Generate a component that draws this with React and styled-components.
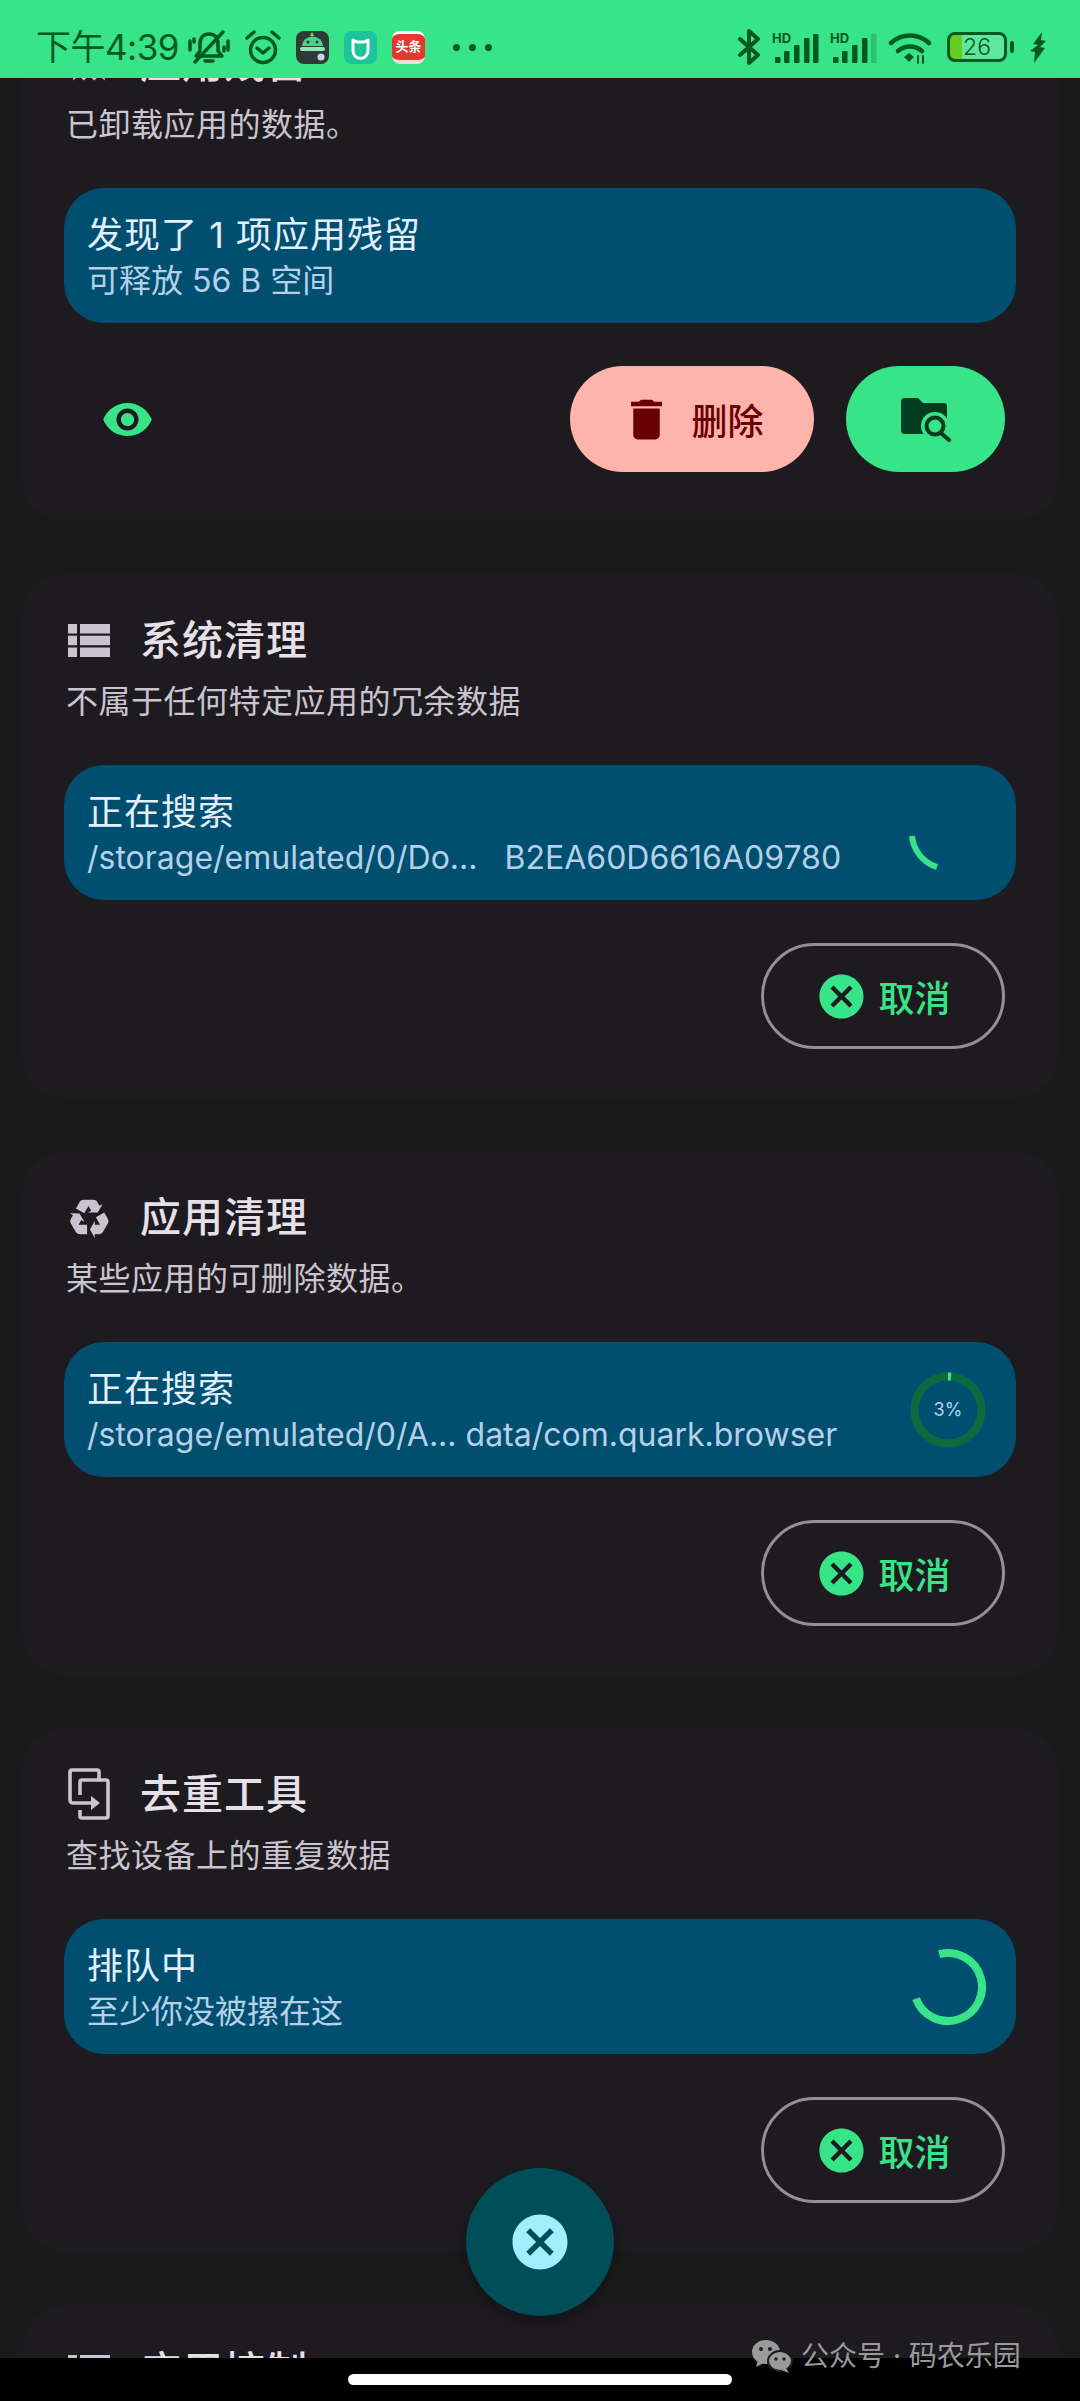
import React from 'react'
import styled, { createGlobalStyle } from 'styled-components'
import { MdCancel, MdDelete, MdVisibility } from 'react-icons/md'

const GREEN = '#38e488'
const STATUS_INK = '#04591f'

const GlobalStyle = createGlobalStyle`
  html, body {
    margin: 0;
    padding: 0;
    background: #1a1a1a;
  }
  * {
    box-sizing: border-box;
  }
`

const Screen = styled.div`
  position: relative;
  display: flex;
  flex-direction: column;
  width: 1080px;
  height: 2401px;
  overflow: hidden;
  background: #1a1a1a;
  font-family: Inter, 'Noto Sans CJK SC', sans-serif;
`

const StatusBar = styled.header`
  flex: none;
  display: flex;
  align-items: center;
  justify-content: space-between;
  height: 78px;
  padding: 16px 34px 0 36px;
  background: ${GREEN};
  color: ${STATUS_INK};
  z-index: 2;
`

const StatusGroup = styled.div`
  display: flex;
  align-items: center;
  gap: ${props => props.$gap}px;
`

const Clock = styled.span`
  width: 142px;
  margin-right: -5px;
  font-size: 35px;
  line-height: 40px;
  white-space: nowrap;
  letter-spacing: -0.5px;
`

const AppTile = styled.div`
  display: flex;
  align-items: center;
  justify-content: center;
  width: 33px;
  height: 33px;
  border-radius: 8px;
  overflow: hidden;
  background: ${props => props.$bg};
`

const ToutiaoTile = styled(AppTile)`
  flex-direction: column;
  padding: 4px 0 5px;
  background: #e5392f;
  border-top: 3px solid #fff;
  border-bottom: 4px solid #f4dcdc;
  color: #fff;
  font-size: 13px;
  line-height: 14px;
  font-weight: 700;
  white-space: nowrap;
`

const Dots = styled.div`
  display: flex;
  gap: 9px;
  margin-left: 13px;
`

const Dot = styled.i`
  display: block;
  width: 7px;
  height: 7px;
  border-radius: 50%;
  background: ${STATUS_INK};
`

const Battery = styled.div`
  position: relative;
  display: flex;
  align-items: center;
  justify-content: center;
  width: 60px;
  height: 30px;
  margin: 0 12px 0 4px;
  border: 3px solid ${STATUS_INK};
  border-radius: 8px;
  background: linear-gradient(to right, #66cc22 22%, #5fe69f 22%);
  font-size: 23px;
  line-height: 24px;
  font-weight: 300;

  &::after {
    content: '';
    position: absolute;
    right: -10px;
    top: 6px;
    width: 4px;
    height: 12px;
    border-radius: 2px;
    background: ${STATUS_INK};
  }
`

const Viewport = styled.main`
  flex: 1;
  min-height: 0;
  overflow: hidden;
`

const CardList = styled.div`
  display: flex;
  flex-direction: column;
  gap: 53px;
  margin: -81px 22px 0;
`

const Card = styled.section`
  flex: none;
  display: flex;
  flex-direction: column;
  height: 524px;
  padding: 39px 42px 50px;
  border-radius: 44px;
  background: #1e1b20;
`

const TitleRow = styled.div`
  display: flex;
  align-items: center;
  gap: 28px;
  height: 54px;
  padding-left: 2px;
  color: #cac4d0;
`

const IconSlot = styled.div`
  flex: none;
  display: flex;
  align-items: center;
  justify-content: center;
  width: 46px;
  height: 54px;
`

const Title = styled.h2`
  margin: 0;
  color: #e6e0e9;
  font-size: 41px;
  line-height: 54px;
  font-weight: 500;
  letter-spacing: 1px;
`

const Subtitle = styled.p`
  margin: 13px 0 41px 2px;
  color: #cac4d0;
  font-size: 32px;
  line-height: 44px;
  letter-spacing: 0.5px;
`

const ResultBox = styled.div`
  flex: none;
  display: flex;
  align-items: center;
  justify-content: space-between;
  height: 135px;
  padding: 0 28px 0 23px;
  border-radius: 40px;
  background: #004f71;
`

const ResultText = styled.div`
  min-width: 0;
  align-self: flex-start;
  padding-top: 24px;
`

const ResultTitle = styled.div`
  color: #e3f0fb;
  font-size: 36px;
  line-height: 46px;
  letter-spacing: 1px;
`

const ResultDetail = styled.div`
  color: #b6d0e8;
  font-size: 32px;
  line-height: 46px;
  white-space: pre;
`

const ProgressBox = styled.div`
  flex: none;
  position: relative;
  display: flex;
  align-items: center;
  justify-content: center;
  width: 80px;
  height: 80px;
  color: #b6d0e8;
  font-size: 18px;
`

const ProgressRing = styled.svg`
  position: absolute;
  inset: 0;
`

const ActionRow = styled.div`
  display: flex;
  align-items: center;
  justify-content: ${props => (props.$split ? 'space-between' : 'flex-end')};
  margin-top: 43px;
  padding: 0 11px 0 37px;
`

const ActionGroup = styled.div`
  display: flex;
  gap: 32px;
`

const EyeButton = styled.div`
  display: flex;
  color: ${GREEN};
  font-size: 53px;
`

const PillButton = styled.button`
  display: flex;
  align-items: center;
  justify-content: center;
  gap: 14px;
  width: 244px;
  height: 106px;
  padding: 0;
  border: none;
  border-radius: 53px;
  font-family: inherit;
  font-size: 36px;
  font-weight: 500;
`

const DeleteButton = styled(PillButton)`
  gap: 18px;
  background: #ffb4ab;
  color: #690005;
`

const SearchButton = styled(PillButton)`
  width: 159px;
  background: ${GREEN};
`

const CancelButton = styled(PillButton)`
  gap: 10px;
  border: 3px solid #938f99;
  background: transparent;
  color: ${GREEN};
`

const Fab = styled.div`
  position: absolute;
  left: 466px;
  top: 2168px;
  display: flex;
  align-items: center;
  justify-content: center;
  width: 148px;
  height: 148px;
  border-radius: 50%;
  background: #004f58;
  color: #a2eeff;
  font-size: 66px;
  box-shadow: 0 6px 16px rgba(0, 0, 0, 0.3);
  z-index: 3;
`

const NavBar = styled.footer`
  flex: none;
  display: flex;
  justify-content: center;
  height: 43px;
  padding-top: 16px;
  background: #000;
  z-index: 2;
`

const HomeHandle = styled.div`
  width: 384px;
  height: 11px;
  border-radius: 6px;
  background: #fff;
`

const Watermark = styled.div`
  position: absolute;
  left: 751px;
  top: 2338px;
  display: flex;
  align-items: center;
  gap: 8px;
  color: #9a9a9a;
  font-size: 28px;
  line-height: 36px;
  white-space: nowrap;
  z-index: 4;
`

const MutedBell = () => (
  <svg width='42' height='36' viewBox='0 0 42 36' fill='none' stroke={STATUS_INK} strokeWidth='3.5' strokeLinecap='round' strokeLinejoin='round'>
    <path d='M21 5c-6 0-9 4-9 10v7l-4 5h26l-4-5v-7c0-6-3-10-9-10z' />
    <path d='M17 32h8' />
    <path d='M7 33L35 3' />
    <path d='M2 12v9M6 10v3M40 12v9M36 18v4' />
  </svg>
)

const AlarmClock = () => (
  <svg width='36' height='36' viewBox='0 0 36 36' fill='none' stroke={STATUS_INK} strokeWidth='3.5' strokeLinecap='round' strokeLinejoin='round'>
    <circle cx='18' cy='21' r='12.5' />
    <path d='M12 19l6 5 6-5' />
    <path d='M2 9l7-6M34 9l-7-6' />
  </svg>
)

const Bluetooth = () => (
  <svg width='24' height='36' viewBox='0 0 24 36' fill='none' stroke={STATUS_INK} strokeWidth='4' strokeLinejoin='round' strokeLinecap='round'>
    <path d='M3 10l18 16-9 8V2l9 8-18 16' />
  </svg>
)

const SIGNAL_BARS = [[3, 6], [12, 12], [22, 18], [32, 25], [41, 29]]

const Signal = ({ weak }) => (
  <svg width='47' height='31' viewBox='0 0 47 31' fill={STATUS_INK}>
    <text x='0' y='11' fontSize='13' fontWeight='700' fontFamily='Inter, sans-serif'>HD</text>
    {SIGNAL_BARS.map(([x, h], idx) => (
      <rect key={idx} x={x} y={31 - h} width='5.5' height={h} rx='1' opacity={weak && idx === 4 ? 0.25 : 1} />
    ))}
  </svg>
)

const Wifi = () => (
  <svg width='44' height='33' viewBox='0 0 44 33' fill='none' stroke={STATUS_INK} strokeWidth='4.5' strokeLinecap='round'>
    <path d='M3 12C14 2 30 2 41 12' />
    <path d='M10 20c7-6 17-6 24 0' />
    <path d='M16 26l5-4 5 4-5 5z' fill={STATUS_INK} stroke='none' />
    <path d='M30 25v7M35 25v7' strokeWidth='2' />
  </svg>
)

const Bolt = () => (
  <svg width='16' height='31' viewBox='0 0 16 31' fill={STATUS_INK}>
    <path d='M12 0L3 12l5 1-8 6 5 1-1 11 11-15-5-1 6-6-5-1z' />
  </svg>
)

const RobotIcon = () => (
  <svg width='33' height='33' viewBox='0 0 33 33'>
    <path d='M6 15a10 9 0 0 1 21 0z' fill='#4fd08a' />
    <rect x='4' y='16' width='25' height='4' rx='2' fill='#8fe6b5' />
    <circle cx='12' cy='11' r='1.5' fill='#2e3a36' />
    <circle cx='21' cy='11' r='1.5' fill='#2e3a36' />
    <path d='M16 1l2 4h-4z' fill='#9bd14a' />
    <circle cx='25' cy='26' r='3.5' fill='#c7d3e6' />
  </svg>
)

const CatIcon = () => (
  <svg width='33' height='33' viewBox='0 0 33 33' fill='none' stroke='#fff' strokeWidth='3'>
    <path d='M9 9l4 2h7l4-2v11a7.5 7.5 0 0 1-15 0z' strokeLinejoin='round' />
  </svg>
)

const GhostIcon = () => (
  <svg width='42' height='42' viewBox='0 0 24 24' fill='currentColor'>
    <path d='M12 2a9 9 0 0 0-9 9v11l3-3 3 3 3-3 3 3 3-3 3 3V11a9 9 0 0 0-9-9z' />
  </svg>
)

const ListIcon = () => (
  <svg width='42' height='33' viewBox='0 0 42 33' fill='currentColor'>
    <rect x='0' y='0' width='9' height='9.5' />
    <rect x='12' y='0' width='30' height='9.5' />
    <rect x='0' y='11.7' width='9' height='9.5' />
    <rect x='12' y='11.7' width='30' height='9.5' />
    <rect x='0' y='23.5' width='9' height='9.5' />
    <rect x='12' y='23.5' width='30' height='9.5' />
  </svg>
)

const RecycleIcon = () => (
  <svg width='50' height='50' viewBox='0 0 24 24' fill='currentColor'>
    <path d='M21.82,15.42L19.32,19.75C18.83,20.61 17.92,21.06 17,21H15V23L12.5,18.5L15,14V16H17.82L15.6,12.15L19.93,9.65L21.73,12.77C22.25,13.54 22.32,14.57 21.82,15.42M9.21,3.06H14.21C15.19,3.06 16.04,3.63 16.45,4.45L17.45,6.19L19.18,5.19L16.54,9.6L11.39,9.69L13.12,8.69L11.71,6.24L9.5,10.09L5.16,7.59L6.96,4.47C7.37,3.64 8.22,3.06 9.21,3.06M5.05,19.76L2.55,15.43C2.06,14.58 2.13,13.56 2.64,12.79L3.64,11.06L1.91,10.06L7.05,10.14L9.7,14.56L7.97,13.56L6.56,16H11V21H7.4C6.47,21.07 5.55,20.61 5.05,19.76Z' />
  </svg>
)

const DedupeIcon = () => (
  <svg width='46' height='54' viewBox='0 0 46 54' fill='none' stroke='currentColor' strokeWidth='3.6'>
    <path d='M33 12V5a2 2 0 0 0-2-2H6a2 2 0 0 0-2 2v28a3 3 0 0 0 3 3h20' />
    <path d='M25 29l9 7-9 7z' fill='currentColor' stroke='none' />
    <path d='M14 28V15a2 2 0 0 1 2-2h24a2 2 0 0 1 2 2v34a2 2 0 0 1-2 2H16a2 2 0 0 1-2-2v-6' />
  </svg>
)

const FolderSearch = () => (
  <svg width='54' height='46' viewBox='0 0 54 46'>
    <path d='M2 6a4 4 0 0 1 4-4h13l5 5h21a3 3 0 0 1 3 3v25a3 3 0 0 1-3 3H6a4 4 0 0 1-4-4z' fill='#003d1e' />
    <circle cx='36' cy='30' r='14' fill={GREEN} />
    <circle cx='36' cy='30' r='8.5' fill={GREEN} stroke='#003d1e' strokeWidth='4' />
    <path d='M42 37l8 7' stroke='#003d1e' strokeWidth='4' strokeLinecap='round' />
  </svg>
)

const WeChatMark = () => (
  <svg width='42' height='34' viewBox='0 0 42 34' fill='#9a9a9a'>
    <ellipse cx='15' cy='13' rx='14' ry='12' />
    <path d='M7 21l-2 7 8-4z' />
    <ellipse cx='29' cy='22' rx='12' ry='10' stroke='#1e1b20' strokeWidth='2' />
    <path d='M35 29l3 5-8-3z' />
    <circle cx='10' cy='10' r='2' fill='#1e1b20' />
    <circle cx='19' cy='10' r='2' fill='#1e1b20' />
    <circle cx='25' cy='20' r='1.7' fill='#1e1b20' />
    <circle cx='33' cy='20' r='1.7' fill='#1e1b20' />
  </svg>
)

const Progress = ({ kind }) => {
  if (kind === 'percent') {
    return (
      <ProgressBox>
        <ProgressRing width='80' height='80' viewBox='0 0 80 80' fill='none' strokeWidth='8'>
          <circle cx='40' cy='40' r='33.5' stroke='#0b6b3e' />
          <path d='M40 6.5a33.5 33.5 0 0 1 3 .1' stroke={GREEN} strokeWidth='8' />
        </ProgressRing>
        3%
      </ProgressBox>
    )
  }
  const arc = kind === 'short'
    ? 'M4 43A36 36 0 0 0 29 74'
    : 'M31.2 7.2A34 34 0 1 1 8.05 51.6'
  return (
    <ProgressBox>
      <ProgressRing width='80' height='80' viewBox='0 0 80 80' fill='none'>
        <path d={arc} stroke={GREEN} strokeWidth={kind === 'short' ? 6 : 8} />
      </ProgressRing>
    </ProgressBox>
  )
}

const Cancel = () => (
  <CancelButton>
    <MdCancel size={53} />
    取消
  </CancelButton>
)

const CARDS = [
  {
    icon: <GhostIcon />,
    title: '应用残留',
    subtitle: '已卸载应用的数据。',
    result: '发现了 1 项应用残留',
    detail: '可释放 56 B 空间',
    done: true
  },
  {
    icon: <ListIcon />,
    title: '系统清理',
    subtitle: '不属于任何特定应用的冗余数据',
    result: '正在搜索',
    detail: '/storage/emulated/0/Do...   B2EA60D6616A09780',
    progress: 'short'
  },
  {
    icon: <RecycleIcon />,
    title: '应用清理',
    subtitle: '某些应用的可删除数据。',
    result: '正在搜索',
    detail: '/storage/emulated/0/A... data/com.quark.browser',
    progress: 'percent'
  },
  {
    icon: <DedupeIcon />,
    title: '去重工具',
    subtitle: '查找设备上的重复数据',
    result: '排队中',
    detail: '至少你没被摞在这',
    progress: 'long'
  },
  {
    icon: <ListIcon />,
    title: '应用控制',
    subtitle: '管理已安装的应用。'
  }
]

const ToolCard = ({ card }) => (
  <Card>
    <TitleRow>
      <IconSlot>{card.icon}</IconSlot>
      <Title>{card.title}</Title>
    </TitleRow>
    <Subtitle>{card.subtitle}</Subtitle>
    {card.result && (
      <ResultBox>
        <ResultText>
          <ResultTitle>{card.result}</ResultTitle>
          <ResultDetail>{card.detail}</ResultDetail>
        </ResultText>
        {card.progress && <Progress kind={card.progress} />}
      </ResultBox>
    )}
    {card.done && (
      <ActionRow $split>
        <EyeButton><MdVisibility /></EyeButton>
        <ActionGroup>
          <DeleteButton>
            <MdDelete size={53} />
            删除
          </DeleteButton>
          <SearchButton><FolderSearch /></SearchButton>
        </ActionGroup>
      </ActionRow>
    )}
    {card.progress && (
      <ActionRow>
        <Cancel />
      </ActionRow>
    )}
  </Card>
)

export default function App () {
  return (
    <Screen>
      <GlobalStyle />
      <StatusBar>
        <StatusGroup $gap={15}>
          <Clock>下午4:39</Clock>
          <MutedBell />
          <AlarmClock />
          <AppTile $bg='#2e3a36'><RobotIcon /></AppTile>
          <AppTile $bg='#1dc39a'><CatIcon /></AppTile>
          <ToutiaoTile>头条</ToutiaoTile>
          <Dots><Dot /><Dot /><Dot /></Dots>
        </StatusGroup>
        <StatusGroup $gap={11}>
          <Bluetooth />
          <Signal />
          <Signal weak />
          <Wifi />
          <Battery>26</Battery>
          <Bolt />
        </StatusGroup>
      </StatusBar>
      <Viewport>
        <CardList>
          {CARDS.map((card, idx) => <ToolCard key={idx} card={card} />)}
        </CardList>
      </Viewport>
      <Fab><MdCancel /></Fab>
      <NavBar><HomeHandle /></NavBar>
      <Watermark>
        <WeChatMark />
        公众号 · 码农乐园
      </Watermark>
    </Screen>
  )
}
